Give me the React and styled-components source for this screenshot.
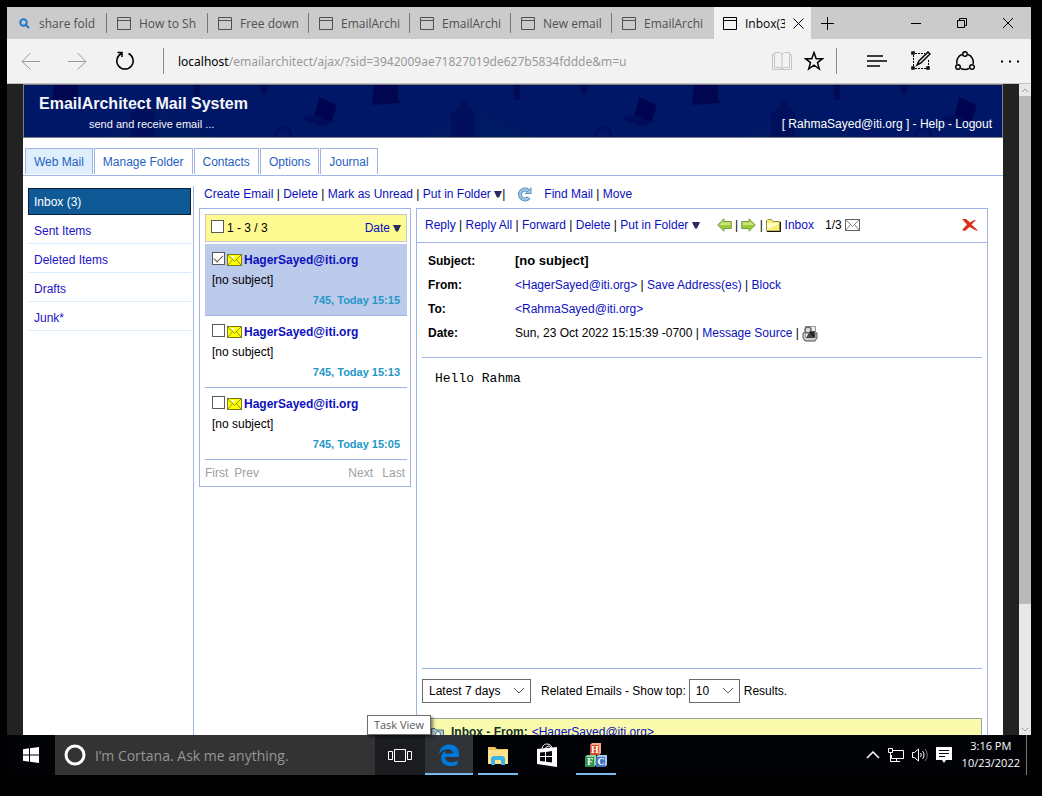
import React from 'react';
import styled, { createGlobalStyle, css } from 'styled-components';

const LINE = '#9db4e4';
const UI_FONT = '"Open Sans", "Noto Sans", sans-serif';
const PAGE_FONT = '"Liberation Sans", Arial, sans-serif';

const GlobalStyle = createGlobalStyle`
  *, *::before, *::after { box-sizing: border-box; }
  body { margin: 0; background: #000; font-family: ${PAGE_FONT}; font-size: 12px; }
  button, input, select { font: inherit; color: inherit; margin: 0; }
  svg { display: block; flex: none; }
`;

const Desktop = styled.div`
  display: flex;
  flex-direction: column;
  height: 100vh;
  padding: 7px 11px 21px 7px;
`;

/* ---------- browser chrome ---------- */

const TabStrip = styled.div`
  display: flex;
  flex: none;
  height: 32px;
  background: #cbcbcb;
  font-family: ${UI_FONT};
  font-size: 12px;
  color: #505050;
`;

const BrowserTab = styled.button`
  display: flex;
  align-items: center;
  gap: 8px;
  flex: 0 1 101px;
  min-width: 0;
  padding: 0 7px 0 10px;
  border: 0;
  background: linear-gradient(#777, #777) right center / 1px 20px no-repeat;
  ${(p) => p.$first && css`flex-basis: 100px; gap: 9px; padding-left: 12px;`}
  ${(p) => p.$last && css`background: none; flex-basis: 102px;`}
`;

const ActiveTab = styled.div`
  display: flex;
  align-items: center;
  gap: 8px;
  flex: 0 1 97px;
  min-width: 0;
  padding: 0 7px 0 9px;
  background: #f2f2f2;
  color: #000;
`;

const TabTitle = styled.span`
  flex: 1;
  min-width: 0;
  overflow: hidden;
  white-space: nowrap;
  text-align: left;
`;

const PlainButton = styled.button`
  display: grid;
  place-items: center;
  flex: none;
  width: ${(p) => p.$w}px;
  padding: 0;
  border: 0;
  background: none;
  color: ${(p) => p.$color || '#000'};
`;

const Spacer = styled.div`
  flex: 1;
`;

const AddressBar = styled.div`
  display: flex;
  align-items: stretch;
  flex: none;
  height: 45px;
  padding-right: 2px;
  background: #f2f2f2;
  border-bottom: 1px solid #c4c4c4;
`;

const BarRule = styled.span`
  flex: none;
  align-self: center;
  width: 1px;
  height: 26px;
  margin: 0 14px 0 ${(p) => p.$before}px;
  background: #8a8a8a;
`;

const Address = styled.label`
  display: flex;
  align-items: center;
  flex: 1;
  min-width: 0;
  font-family: "Noto Sans", "Open Sans", sans-serif;
  font-size: 12px;
  color: #000;
`;

const AddressInput = styled.input`
  flex: 1;
  min-width: 0;
  padding: 0;
  border: 0;
  outline: 0;
  background: none;
  color: #999;
`;

/* ---------- viewport ---------- */

const Viewport = styled.div`
  display: flex;
  flex: 1;
  min-height: 0;
  overflow: hidden;
`;

const Backdrop = styled.div`
  flex: 1;
  min-width: 0;
  padding: 0 16px;
  background: #222;
`;

const Scrollbar = styled.div`
  display: flex;
  flex-direction: column;
  flex: none;
  width: 12px;
  background: #e8e8e8;
`;

const ScrollEnd = styled.span`
  display: grid;
  place-items: center;
  flex: none;
  height: 12px;
`;

const ScrollTrack = styled.div`
  flex: 1;
  background: linear-gradient(#b9b9b9, #b9b9b9) top / 100% 81% no-repeat;
`;

const Page = styled.div`
  display: flex;
  flex-direction: column;
  min-height: 100%;
  background: #fff;
`;

const Banner = styled.header`
  display: grid;
  flex: none;
  height: 54px;
  overflow: hidden;
  border: 1px solid #808080;
  background: #00176b;
  color: #f4f4fa;
  > * { grid-area: 1 / 1; }
`;

const BannerText = styled.div`
  display: flex;
  justify-content: space-between;
  align-items: flex-end;
  padding: 0 10px 5px 15px;
`;

const Brand = styled.h1`
  margin: 0;
  font-size: 16px;
  line-height: 20px;
`;

const Tagline = styled.p`
  margin: 0 0 0 50px;
  padding-top: 2px;
  font-size: 11px;
  line-height: 16px;
`;

const Account = styled.div`
  line-height: 16px;
  color: #fff;
  a { color: inherit; text-decoration: none; }
`;

const NavTabs = styled.nav`
  display: flex;
  flex: none;
  gap: 1px;
  padding: 10px 2px 1px;
  border-bottom: 1px solid ${LINE};
`;

const NavTab = styled.a`
  height: 26px;
  padding: 0 8px;
  border: 1px solid ${LINE};
  border-bottom: 0;
  background: ${(p) => (p.$active ? '#dfeefc' : '#fff')};
  color: #1f62c4;
  line-height: 26px;
  text-decoration: none;
`;

const Workspace = styled.div`
  display: flex;
  flex: 1;
`;

const Sidebar = styled.aside`
  display: flex;
  flex-direction: column;
  flex: none;
  width: 171px;
  margin-top: 10px;
  padding: 2px 2px 0 5px;
  border-right: 1px solid ${LINE};
`;

const FolderLink = styled.a`
  height: 29px;
  padding: 3px 6px 0;
  border-bottom: 1px solid #dcebfa;
  color: #2212c4;
  line-height: 26px;
  text-decoration: none;
  ${(p) => p.$active && css`
    height: 27px;
    padding: 0 5px;
    border: 1px solid #0a2038;
    background: #0f5a96;
    color: #fff;
  `}
`;

const Content = styled.main`
  display: flex;
  flex-direction: column;
  flex: 1;
  min-width: 0;
  padding: 0 15px 0 5px;
`;

const Toolbar = styled.div`
  display: flex;
  align-items: center;
  height: 32px;
  padding: 4px 0 0 5px;
`;

const Actions = styled.span`
  white-space: pre;
  margin-right: ${(p) => p.$after || 0}px;
`;

const Link = styled.a`
  color: #0b10bc;
  text-decoration: none;
`;

const IconButton = styled.button`
  display: inline-flex;
  padding: 0;
  margin: 0 ${(p) => p.$gap || 0}px;
  border: 0;
  background: none;
`;

const Columns = styled.div`
  display: flex;
  align-items: flex-start;
  flex: 1;
  gap: 5px;
`;

const ListPanel = styled.section`
  flex: none;
  width: 212px;
  padding: 5px 3px 0 5px;
  border: 1px solid ${LINE};
`;

const ListHeader = styled.div`
  display: flex;
  align-items: center;
  justify-content: space-between;
  height: 28px;
  margin-bottom: 2px;
  padding: 0 5px;
  border: 1px solid #c6c6c6;
  background: #fcfa90;
`;

const Inline = styled.span`
  display: flex;
  align-items: center;
  gap: ${(p) => p.$gap || 3}px;
`;

const Check = styled.input.attrs({ type: 'checkbox' })`
  display: grid;
  place-items: center;
  appearance: none;
  width: 13px;
  height: 13px;
  margin-bottom: 3px;
  border: 1px solid #5a5a5a;
  background: #fff;
  &:checked::before {
    content: '';
    width: 9px;
    height: 5px;
    border: solid #555;
    border-width: 0 0 1px 1px;
    transform: translateY(-1px) rotate(-45deg);
  }
`;

const MessageList = styled.ul`
  margin: 0;
  padding: 0;
  list-style: none;
`;

const MessageRow = styled.li`
  height: 72px;
  padding: 6px 7px 5px;
  border-bottom: 1px solid ${LINE};
  background: ${(p) => (p.$selected ? '#bccaec' : '#fff')};
  line-height: 20px;
`;

const Sender = styled(Link)`
  font-weight: bold;
`;

const Meta = styled.div`
  color: #2398c8;
  font-size: 11px;
  font-weight: bold;
  text-align: right;
`;

const Pager = styled.div`
  display: flex;
  gap: 6px;
  height: 26px;
  padding-right: 2px;
  color: #a0a0a0;
  line-height: 26px;
`;

const Reader = styled.section`
  flex: 1;
  min-width: 0;
  border: 1px solid ${LINE};
`;

const ReaderBar = styled.div`
  display: flex;
  align-items: center;
  height: 34px;
  padding: 0 8px 2px;
  border-bottom: 1px solid ${LINE};
`;

const ReaderInner = styled.div`
  padding: 0 5px;
`;

const Fields = styled.dl`
  display: grid;
  grid-template-columns: 87px 1fr;
  margin: 0;
  padding: 6px 6px 12px;
  border-bottom: 1px solid ${LINE};
  line-height: 24px;
  dt { font-weight: bold; }
  dd { display: flex; align-items: center; margin: 0; white-space: pre; }
`;

const SubjectText = styled.strong`
  font-size: 13px;
`;

const MessageBody = styled.pre`
  min-height: 311px;
  margin: 0;
  padding: 13px;
  border-bottom: 1px solid ${LINE};
  font-family: "Liberation Mono", monospace;
  font-size: 13px;
  line-height: 16px;
`;

const Related = styled.div`
  display: flex;
  align-items: center;
  padding: 10px 0 15px;
`;

const Picker = styled.span`
  display: grid;
  align-items: center;
  width: ${(p) => p.$w}px;
  > * { grid-area: 1 / 1; }
  svg { justify-self: end; margin-right: 6px; pointer-events: none; }
`;

const Select = styled.select`
  appearance: none;
  width: 100%;
  height: 24px;
  padding: 0 6px;
  border: 1px solid #6a6a6a;
  border-radius: 0;
  background: #fff;
`;

const RelatedLabel = styled.label`
  margin: 0 3px 0 10px;
`;

const RelatedText = styled.span`
  margin-left: 4px;
`;

const RelatedHead = styled.div`
  display: flex;
  align-items: center;
  height: 28px;
  padding-left: 8px;
  border: 1px solid #a0a0a0;
  background: #fafaad;
  b { margin: 0 4px 0 7px; color: #12302c; }
`;

/* ---------- taskbar ---------- */

const Taskbar = styled.footer`
  display: flex;
  flex: none;
  height: 40px;
  background: #010307;
  color: #fff;
  font-family: ${UI_FONT};
`;

const Search = styled.label`
  display: flex;
  align-items: center;
  gap: 9px;
  flex: 0 1 320px;
  min-width: 0;
  padding-left: 9px;
  background: #333;
`;

const SearchInput = styled.input`
  flex: 1;
  min-width: 0;
  padding: 0;
  border: 0;
  outline: 0;
  background: none;
  font-size: 14px;
  &::placeholder { color: #969696; opacity: 1; }
`;

const TaskView = styled.button`
  position: relative;
  display: grid;
  place-items: center;
  flex: none;
  width: 50px;
  padding: 0;
  border: 0;
  background: #1b1d21;
`;

const Tooltip = styled.span`
  position: absolute;
  bottom: 100%;
  left: -8px;
  width: 64px;
  height: 20px;
  border: 1px solid #707070;
  background: #fff;
  box-shadow: 2px 2px 3px rgba(0, 0, 0, 0.5);
  color: #575757;
  font-size: 11px;
  line-height: 18px;
  white-space: nowrap;
  text-align: center;
`;

const Apps = styled.div`
  display: flex;
  gap: 1px;
`;

const AppButton = styled.button`
  display: grid;
  place-items: center;
  width: 48px;
  padding: 0;
  border: 0;
  background: ${(p) => (p.$active ? '#303338' : 'transparent')};
  ${(p) => p.$open && css`
    background-image: linear-gradient(#76b9ed, #76b9ed);
    background-repeat: no-repeat;
    background-position: center bottom;
    background-size: ${p.$active ? 48 : 40}px 2px;
  `}
`;

const Tray = styled.div`
  display: flex;
  align-items: center;
  gap: 8px;
  padding-right: 10px;
`;

const Clock = styled.time`
  align-self: center;
  padding: 0 6px 2px 0;
  font-size: 11px;
  line-height: 17px;
  text-align: center;
`;

const ShowDesktop = styled.button`
  width: 5px;
  padding: 0;
  border: 0;
  border-left: 1px solid #777;
  background: none;
`;

/* ---------- drawings ---------- */

const Stroke = ({ w, h, d, sw = 1, children, ...rest }) => (
  <svg width={w} height={h} viewBox={`0 0 ${w} ${h}`} fill="none" stroke="currentColor" strokeWidth={sw} {...rest}>
    {d && <path d={d} />}
    {children}
  </svg>
);

const WindowIcon = () => (
  <Stroke w={14} h={13} d="M.5 .5H13.5V12.5H.5ZM.5 3.5H13.5" />
);

const InlineSvg = styled.svg`
  display: inline-block;
`;

const Triangle = () => (
  <InlineSvg width="8" height="8" viewBox="0 0 8 8">
    <path d="M0 1H8L5 7.500H3Z" fill="#2b2a62" />
  </InlineSvg>
);

const Chevron = () => <Stroke w={12} h={8} d="M1 1L6 6L11 1" color="#555" />;

const Envelope = ({ fill = '#ffff00', line = '#7b7b20', shine = '#fff' }) => (
  <svg width="15" height="12" viewBox="0 0 15 12">
    <rect x=".5" y=".5" width="14" height="11" fill={fill} stroke={line} />
    <path d="M4 2H8L6 5Z" fill={shine} />
    <path d="M1 1L7.500 7.500L14 1M1 11L5.500 5.500M14 11L9.500 5.500" fill="none" stroke={line} strokeWidth=".8" />
  </svg>
);

const Arrow = ({ flip }) => (
  <svg width="15" height="14" viewBox="0 0 15 14">
    <g transform={flip ? 'matrix(-1 0 0 1 15 0)' : undefined}>
      <path d="M.7 7L7 .8V3.500H14.300V10.500H7V13.200Z" fill="#9ccb35" stroke="#7d9b4a" />
      <path d="M2.500 6.700L6.200 3V4.500H13.300V7H2.500Z" fill="#cbe680" />
    </g>
  </svg>
);

const Folder = () => (
  <svg width="15" height="14" viewBox="0 0 15 14">
    <path d="M.5 13V3L2 1.500H5.500L7 3.500H13.500V13Z" fill="#f7ec78" stroke="#9c8c34" />
    <path d="M1 5H13V6L1 12Z" fill="#fffcc0" />
    <path d="M1 13.500H14.500V4" fill="none" stroke="#111" />
  </svg>
);

const RedCross = () => (
  <svg width="18" height="14" viewBox="0 0 18 14">
    <path d="M1 1L5 1L9 4.500L13 2L15 2L10.500 6.500L17 12.500L15 12.500L8.500 9L4 13L1 12L6 6.500Z" fill="#d8301c" />
  </svg>
);

const Refresh = () => (
  <svg width="15" height="16" viewBox="0 0 15 16" fill="none">
    <path d="M11 4.500A5 5 0 1 0 12 11.500" stroke="#5d93c2" strokeWidth="4" />
    <path d="M14.500 1V8H7.500Z" fill="#5d93c2" />
    <path d="M11 4.500A5 5 0 1 0 12 11.500" stroke="#a3c8e6" strokeWidth="2" />
    <path d="M13.500 3V7H9.500Z" fill="#a3c8e6" />
  </svg>
);

const Preview = () => (
  <svg width="16" height="17" viewBox="0 0 16 17">
    <path d="M1 8L3 7H13L15 8V13L13 16H3L1 13Z" fill="#ccc" stroke="#555" />
    <rect x="3.500" y="1.500" width="10" height="11" fill="#eee" stroke="#999" />
    <path d="M4 13L8 6H13V13Z" fill="#444" />
    <circle cx="6" cy="5" r="3" fill="#ddd" stroke="#666" strokeWidth="1.500" />
    <path d="M8 7L12 11" stroke="#222" strokeWidth="2" />
  </svg>
);

const BannerArt = () => (
  <svg width="100%" height="52">
    <defs>
      <pattern id="office" width="320" height="52" patternUnits="userSpaceOnUse">
        <rect width="320" height="52" fill="#001767" />
        <path d="M80 52L130 20L190 52Z" fill="#001964" />
        <path d="M30 0H54V15L58 18L28 20Z" fill="#00064f" />
        <path d="M107 52V28L113 23H127L131 28V52Z" fill="#00105d" />
        <circle cx="119" cy="19" r="5" fill="#00105d" />
        <path d="M169 0H176V15H171ZM236 0H243V8H238Z" fill="#000a55" />
        <path d="M295 12L313 20L308 37L290 32Z" fill="#000450" />
        <path d="M276 33L290 30L308 38L298 42Z" fill="#000d5a" />
        <path d="M252 52Q252 42 260 42Q267 42 267 52" fill="none" stroke="#000f5b" strokeWidth="3" />
      </pattern>
    </defs>
    <rect width="100%" height="52" fill="url(#office)" />
  </svg>
);

const EdgeLogo = () => (
  <svg width="22" height="22" viewBox="0 0 22 22">
    <path d="M1 10C2 3 6 .5 11.500 .5C18 .5 21 5 21 10V13H7C7.500 19 15 19.500 19.500 16.500V20.500C13 24 3 22 3 14C3 10.500 5.500 8 8 6.500C7.300 7.500 7 8.500 7 9.500H15C15 4.500 6 3 1 10Z" fill="#0078d7" />
  </svg>
);

const ExplorerLogo = () => (
  <svg width="22" height="19" viewBox="0 0 22 19">
    <path d="M1 1H8L10 3H21V18H1Z" fill="#f0c85a" />
    <path d="M1 4H21V18H1Z" fill="#fde18c" />
    <path d="M4 19V12L6 10H16L18 12V19H14V14H8V19Z" fill="#3cb4e8" />
  </svg>
);

const StoreLogo = () => (
  <svg width="22" height="24" viewBox="0 0 22 24">
    <path d="M6 7C6 2 9 1 11 1C14 1 16 3 16 6M9 6C10 3 14 2 15 5" fill="none" stroke="#fff" />
    <path d="M1 6L21 4V24L1 21Z" fill="#fff" />
    <path d="M4 9.500L9 9V13H4ZM10 8.900L16 8V13H10ZM4 14H9V18.500L4 18ZM10 14H16V19.500L10 18.700Z" fill="#05070b" />
  </svg>
);

const Block = ({ x, y, fill, side, letter }) => (
  <g>
    <path d={`M${x} ${y + 2}L${x + 2} ${y}H${x + 11}V${y + 10}L${x + 9} ${y + 12}H${x}Z`} fill={side} />
    <rect x={x} y={y + 2} width="9" height="10" fill={fill} />
    <text x={x + 5} y={y + 10} fontSize="10" fontWeight="bold" fontFamily="Liberation Serif" textAnchor="middle" fill="#fff">{letter}</text>
  </g>
);

const BlocksLogo = () => (
  <svg width="22" height="24" viewBox="0 0 22 24">
    <Block x={5} y={0} fill="#d8482c" side="#f0b090" letter="H" />
    <Block x={0} y={12} fill="#2f8f4e" side="#8fd0a0" letter="F" />
    <Block x={11} y={12} fill="#3f74c0" side="#a8c8ee" letter="C" />
  </svg>
);

/* ---------- data ---------- */

const BROWSER_TABS = ['How to Sh', 'Free down', 'EmailArchi', 'EmailArchi', 'New email', 'EmailArchi'];
const SECTIONS = ['Web Mail', 'Manage Folder', 'Contacts', 'Options', 'Journal'];
const FOLDERS = ['Inbox (3)', 'Sent Items', 'Deleted Items', 'Drafts', 'Junk*'];
const MESSAGES = ['745, Today 15:15', '745, Today 15:13', '745, Today 15:05'];

const LinkRow = ({ items, after, children }) => (
  <Actions $after={after}>
    {items.map((item, i) => (
      <React.Fragment key={item}>
        {i > 0 && ' | '}
        <Link href="#">{item}</Link>
      </React.Fragment>
    ))}
    {children}
  </Actions>
);

const BrowserChrome = () => (
  <>
    <TabStrip>
      <BrowserTab $first>
        <Stroke w={11} h={11} sw={2} color="#1f78c8"><circle cx="4.500" cy="4.500" r="3.200" /><path d="M7 7L10 10" /></Stroke>
        <TabTitle>share fold</TabTitle>
      </BrowserTab>
      {BROWSER_TABS.map((title, i) => (
        <BrowserTab key={i} $last={i === BROWSER_TABS.length - 1}>
          <WindowIcon />
          <TabTitle>{title}</TabTitle>
        </BrowserTab>
      ))}
      <ActiveTab>
        <WindowIcon />
        <TabTitle>Inbox(3</TabTitle>
        <PlainButton $w={11} aria-label="Close tab"><Stroke w={11} h={11} d="M.5 .5L10.500 10.500M10.500 .5L.5 10.500" /></PlainButton>
      </ActiveTab>
      <PlainButton $w={33} aria-label="New tab"><Stroke w={13} h={13} d="M6.500 0V13M0 6.500H13" /></PlainButton>
      <Spacer />
      <PlainButton $w={46} aria-label="Minimize"><Stroke w={10} h={10} d="M0 5.500H10" /></PlainButton>
      <PlainButton $w={46} aria-label="Restore"><Stroke w={10} h={10} d="M.5 2.500H7.500V9.500H.5ZM2.500 2.500V.5H9.500V7.500H7.500" /></PlainButton>
      <PlainButton $w={46} aria-label="Close"><Stroke w={10} h={10} d="M0 0L10 10M10 0L0 10" /></PlainButton>
    </TabStrip>
    <AddressBar>
      <PlainButton $w={46} $color="#999" aria-label="Back"><Stroke w={19} h={18} d="M19 9.500H1M9.500 1L1 9.500L9.500 17.500" /></PlainButton>
      <PlainButton $w={48} $color="#999" aria-label="Forward"><Stroke w={19} h={18} d="M0 9.500H18M9.500 1L18 9.500L9.500 17.500" /></PlainButton>
      <PlainButton $w={47} aria-label="Refresh">
        <Stroke w={20} h={20} sw={1.5} d="M13.500 2.500A8.200 8.200 0 1 1 6.500 2.500M2.500 1.500H7V6" />
      </PlainButton>
      <BarRule $before={15} />
      <Address>
        localhost
        <AddressInput aria-label="Address" defaultValue="/emailarchitect/ajax/?sid=3942009ae71827019de627b5834fddde&m=u" />
      </Address>
      <PlainButton $w={32} $color="#c4c4c4" aria-label="Reading view">
        <Stroke w={20} h={18} d="M.5 2.500H2.500V.5H7.500L10 2L12.500 .5H17.500V2.500H19.500V17.500H.5V2.500M2.500 2.500V15.500H8L10 17L12 15.500H17.500V2.500M10 2V17" />
      </PlainButton>
      <PlainButton $w={32} aria-label="Favourite">
        <Stroke w={20} h={20} sw={1.5} d="M10 1.500L12.200 7.700H18.500L13.500 11.600L15.300 18L10 14.200L4.700 18L6.500 11.600L1.500 7.700H7.800Z" />
      </PlainButton>
      <BarRule $before={6} />
      <PlainButton $w={52} aria-label="Hub"><Stroke w={20} h={12} sw={1.5} d="M0 1H16M0 6H20M0 11H13" /></PlainButton>
      <PlainButton $w={36} aria-label="Web note">
        <Stroke w={20} h={20}>
          <path d="M4 2.500H14M2.500 4V17M4 17.500H17M17.500 9V17" strokeDasharray="2 1" />
          <path d="M1 1H3V3H1ZM1 16H3V18H1ZM16 16H18V18H16Z" strokeWidth="1.500" />
          <path d="M6 14L8 10L17 1L19 3L10 12Z" strokeWidth="1.500" />
        </Stroke>
      </PlainButton>
      <PlainButton $w={52} aria-label="Share">
        <Stroke w={20} h={20} sw={1.5}>
          <path d="M7 3.500A8 8 0 0 0 2 13M13 3.500A8 8 0 0 1 18 13M6 17.500A9 9 0 0 0 14 17.500" />
          <circle cx="10" cy="3" r="2.300" /><circle cx="3" cy="16" r="2.300" /><circle cx="17" cy="16" r="2.300" />
        </Stroke>
      </PlainButton>
      <PlainButton $w={38} aria-label="More">
        <svg width="18" height="3" viewBox="0 0 18 3"><path d="M0 .5H2V2.500H0ZM8 .5H10V2.500H8ZM16 .5H18V2.500H16Z" /></svg>
      </PlainButton>
    </AddressBar>
  </>
);

const MessageListPanel = () => (
  <ListPanel>
    <ListHeader>
      <Inline as="label"><Check />1 - 3 / 3</Inline>
      <Inline><Link href="#">Date</Link><Triangle /></Inline>
    </ListHeader>
    <MessageList>
      {MESSAGES.map((meta, i) => (
        <MessageRow key={meta} $selected={i === 0}>
          <Inline $gap={2}>
            <Check defaultChecked={i === 0} aria-label="Select message" />
            <Envelope />
            <Sender href="#">HagerSayed@iti.org</Sender>
          </Inline>
          <div>[no subject]</div>
          <Meta>{meta}</Meta>
        </MessageRow>
      ))}
    </MessageList>
    <Pager>
      <span>First</span>
      <span>Prev</span>
      <Spacer />
      <span>Next</span>
      <span>&nbsp;Last</span>
    </Pager>
  </ListPanel>
);

const MessageReader = () => (
  <Reader>
    <ReaderBar>
      <LinkRow after={17} items={['Reply', 'Reply All', 'Forward', 'Delete', 'Put in Folder']}> <Triangle /></LinkRow>
      <IconButton aria-label="Previous"><Arrow /></IconButton>
      <Actions> | </Actions>
      <IconButton aria-label="Next"><Arrow flip /></IconButton>
      <Actions> | </Actions>
      <Folder />
      <Actions $after={11}> <Link href="#">Inbox</Link></Actions>
      <Actions $after={3}>1/3</Actions>
      <Envelope fill="#fff" line="#666" />
      <Spacer />
      <IconButton aria-label="Close message"><RedCross /></IconButton>
    </ReaderBar>
    <ReaderInner>
      <Fields>
        <dt>Subject:</dt>
        <dd><SubjectText>[no subject]</SubjectText></dd>
        <dt>From:</dt>
        <dd><LinkRow items={['<HagerSayed@iti.org>', 'Save Address(es)', 'Block']} /></dd>
        <dt>To:</dt>
        <dd><Link href="#">&lt;RahmaSayed@iti.org&gt;</Link></dd>
        <dt>Date:</dt>
        <dd>
          <Actions $after={3}>Sun, 23 Oct 2022 15:15:39 -0700 | <Link href="#">Message Source</Link> |</Actions>
          <Preview />
        </dd>
      </Fields>
      <MessageBody>Hello Rahma</MessageBody>
      <Related>
        <Picker $w={109}>
          <Select aria-label="Period"><option>Latest 7 days</option></Select>
          <Chevron />
        </Picker>
        <RelatedLabel htmlFor="top">Related Emails - Show top:</RelatedLabel>
        <Picker $w={51}>
          <Select id="top"><option>10</option></Select>
          <Chevron />
        </Picker>
        <RelatedText>Results.</RelatedText>
      </Related>
      <RelatedHead>
        <Stroke w={13} h={12} color="#48707c"><path d="M.5 2.500H4L5 4H12.500V11.500H.5Z" fill="#b8ccd6" /><circle cx="7" cy="8" r="2.500" fill="#fff" /></Stroke>
        <b>Inbox - From:</b>
        <Link href="#">&lt;HagerSayed@iti.org&gt;</Link>
      </RelatedHead>
    </ReaderInner>
  </Reader>
);

const WindowsTaskbar = () => (
  <Taskbar>
    <PlainButton $w={48} $color="#fff" aria-label="Start">
      <svg width="16" height="16" viewBox="0 0 16 16" fill="#fff"><path d="M0 2.200L6 1.300V7.500H0ZM7 1.200L16 0V7.500H7ZM0 8.500H6V14.700L0 13.800ZM7 8.500H16V16L7 14.800Z" /></svg>
    </PlainButton>
    <Search>
      <Stroke w={22} h={22} sw={3} color="#fff"><circle cx="11" cy="11" r="9" /></Stroke>
      <SearchInput aria-label="Search" placeholder="I’m Cortana. Ask me anything." />
    </Search>
    <TaskView>
      <Stroke w={24} h={13} color="#fff" d="M6.500 .5H17.500V12.500H6.500ZM.5 2.500H4.500V10.500H.5ZM19.500 2.500H23.500V10.500H19.500Z" />
      <Tooltip>Task View</Tooltip>
    </TaskView>
    <Apps>
      <AppButton $active $open aria-label="Edge"><EdgeLogo /></AppButton>
      <AppButton $open aria-label="File Explorer"><ExplorerLogo /></AppButton>
      <AppButton aria-label="Store"><StoreLogo /></AppButton>
      <AppButton $open aria-label="Blocks"><BlocksLogo /></AppButton>
    </Apps>
    <Spacer />
    <Tray>
      <Stroke w={14} h={8} sw={1.5} d="M1 7L7 1L13 7" />
      <Stroke w={16} h={14} d="M5 2.500H15.500V10.500H3.500V7M.5 .5H4.500V4.500H.5ZM2.500 5V13.500H12M8.500 10.500V13" />
      <Stroke w={16} h={14}>
        <path d="M.5 4.500H2.500L6.500 1V13L2.500 9.500H.5Z" />
        <path d="M8.500 5A3 3 0 0 1 8.500 9M10.500 3A6 6 0 0 1 10.500 11" />
        <path d="M13 1A9 9 0 0 1 13 13" stroke="#777" />
      </Stroke>
      <svg width="16" height="16" viewBox="0 0 16 16"><path d="M0 0H16V13H10L8 16L6 13H0Z" fill="#fff" /><path d="M3 3.500H13M3 6.500H13M3 9.500H9" stroke="#000" /></svg>
    </Tray>
    <Clock>3:16 PM<br />10/23/2022</Clock>
    <ShowDesktop aria-label="Show desktop" />
  </Taskbar>
);

export default function App() {
  return (
    <Desktop>
      <GlobalStyle />
      <BrowserChrome />
      <Viewport>
        <Backdrop>
          <Page>
            <Banner>
              <BannerArt />
              <BannerText>
                <div>
                  <Brand>EmailArchitect Mail System</Brand>
                  <Tagline>send and receive email ...</Tagline>
                </div>
                <Account>[ RahmaSayed@iti.org ] - <a href="#">Help</a> - <a href="#">Logout</a></Account>
              </BannerText>
            </Banner>
            <NavTabs>
              {SECTIONS.map((s, i) => <NavTab key={s} href="#" $active={i === 0}>{s}</NavTab>)}
            </NavTabs>
            <Workspace>
              <Sidebar>
                {FOLDERS.map((f, i) => <FolderLink key={f} href="#" $active={i === 0}>{f}</FolderLink>)}
              </Sidebar>
              <Content>
                <Toolbar>
                  <LinkRow items={['Create Email', 'Delete', 'Mark as Unread', 'Put in Folder']}> <Triangle />|</LinkRow>
                  <IconButton $gap={12} aria-label="Refresh list"><Refresh /></IconButton>
                  <LinkRow items={['Find Mail', 'Move']} />
                </Toolbar>
                <Columns>
                  <MessageListPanel />
                  <MessageReader />
                </Columns>
              </Content>
            </Workspace>
          </Page>
        </Backdrop>
        <Scrollbar>
          <ScrollEnd><Stroke w={8} h={5} color="#999" d="M1 4L4 1L7 4" /></ScrollEnd>
          <ScrollTrack />
          <ScrollEnd><Stroke w={8} h={5} color="#999" d="M1 1L4 4L7 1" /></ScrollEnd>
        </Scrollbar>
      </Viewport>
      <WindowsTaskbar />
    </Desktop>
  );
}
